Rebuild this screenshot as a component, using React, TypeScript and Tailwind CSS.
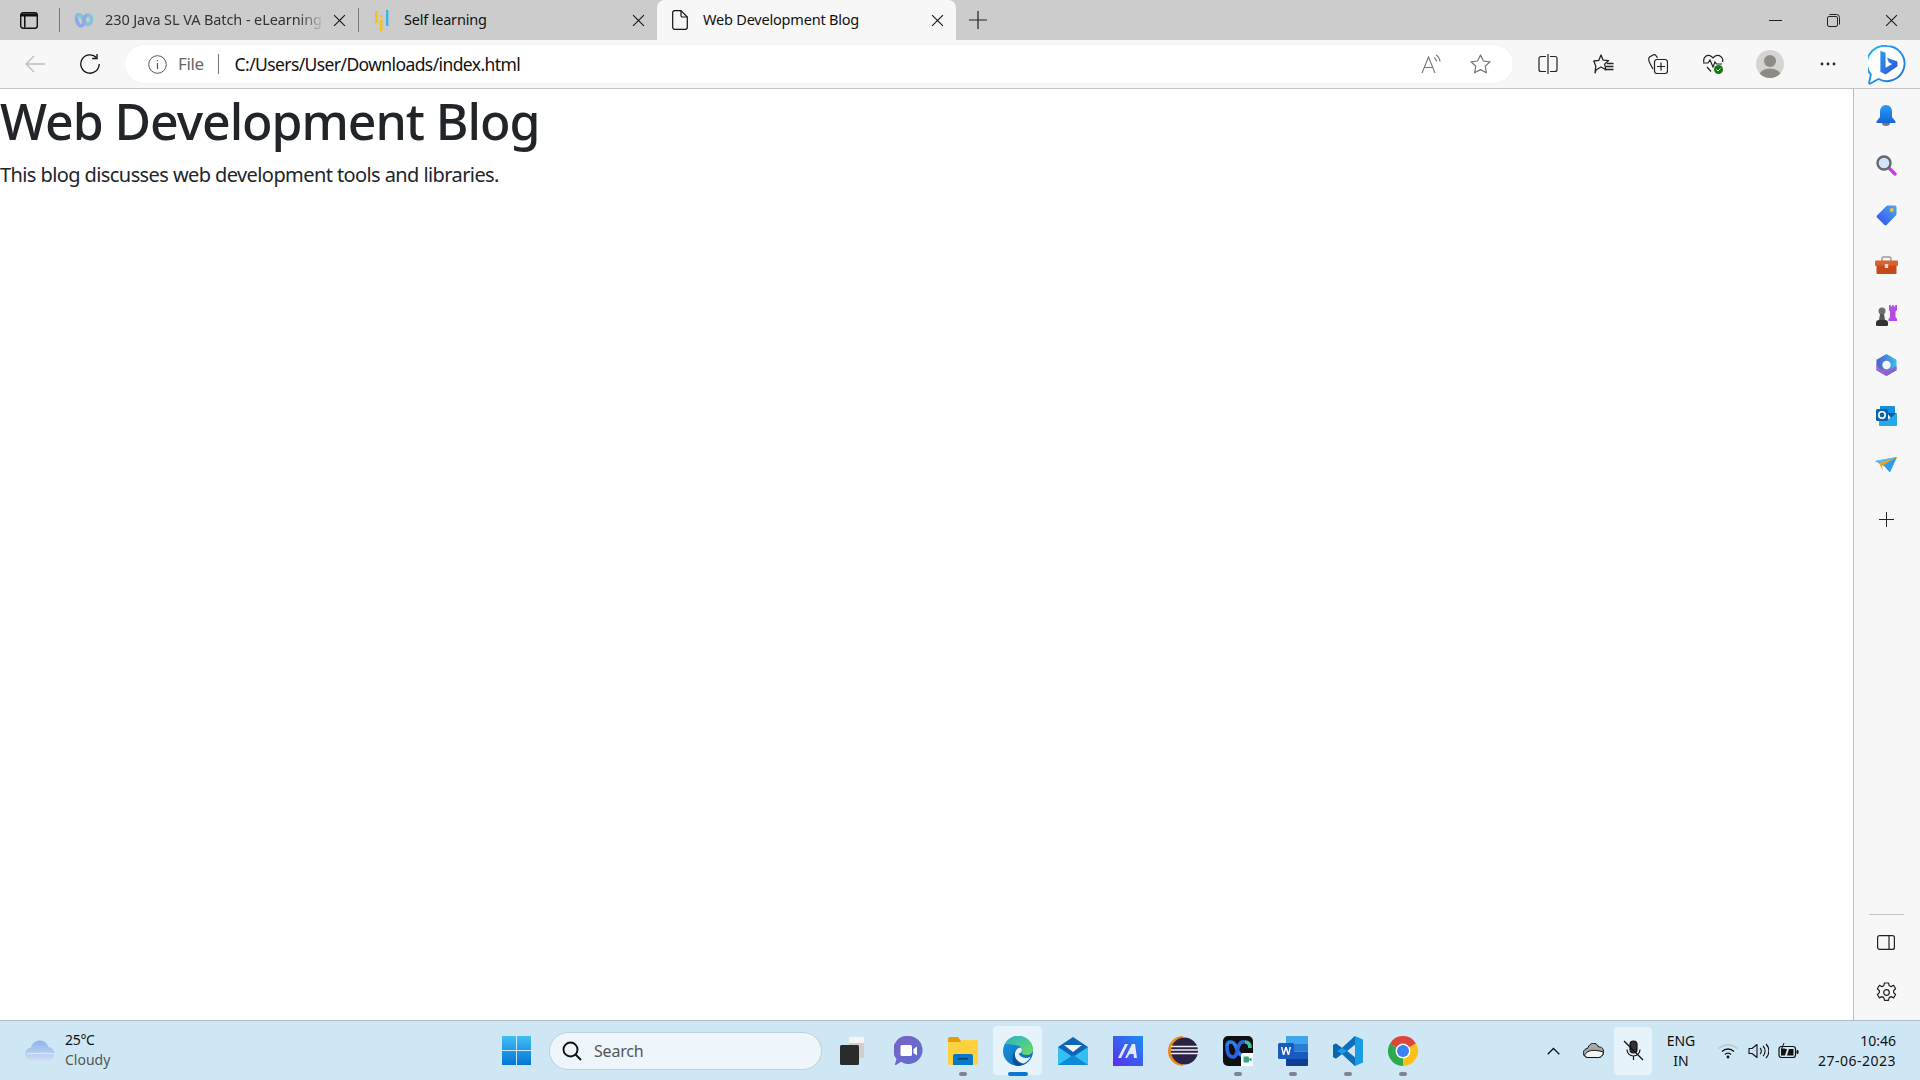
import React from "react";

function X({ s = 13, c = "#1a1a1a" }: { s?: number; c?: string }) {
  return (
    <svg width={s} height={s} viewBox="0 0 12 12" fill="none" stroke={c} strokeWidth="1.100">
      <path d="M1 1l10 10M11 1L1 11" />
    </svg>
  );
}

function Plus({ s = 18 }: { s?: number }) {
  return (
    <svg width={s} height={s} viewBox="0 0 18 18" fill="none" stroke="#222" strokeWidth="1.200">
      <path d="M9 0v18M0 9h18" />
    </svg>
  );
}

function WebexMark() {
  return (
    <svg width="20" height="15" viewBox="0 0 20 15" fill="none" strokeWidth="3.600">
      <path d="M2.500 4c0-4 5-3 7.500 3.500S17.500 11 17.500 7c0-4-2.500-5-4-5" stroke="#7fc4d8" />
      <path d="M2.500 4c0 6 2.500 9 4.500 9s3-2.500 3-5.500S12 2 13.500 2" stroke="#8fa8e8" />
    </svg>
  );
}

function SelfLearningMark() {
  return (
    <svg width="14" height="21" viewBox="0 0 14 21" className="ml-[2px]">
      <rect x="0" y="1" width="2.400" height="12" fill="#f6c018" />
      <rect x="5" y="10" width="2.400" height="11" fill="#f6c018" />
      <rect x="5" y="5" width="2.400" height="2.400" fill="#f6c018" />
      <rect x="11" y="0" width="2.400" height="16" fill="#3fb2e8" />
    </svg>
  );
}

function Tab({
  icon,
  title,
  active,
  fade,
  width,
  textStyle,
}: {
  icon: React.ReactNode;
  title: string;
  active?: boolean;
  fade?: boolean;
  width: string;
  textStyle: string;
}) {
  return (
    <div
      className={`flex h-10 items-center ${width} ${
        active ? "rounded-t-lg bg-[#f7f7f7] pl-[15px] pr-[12px]" : "pl-[14px] pr-[12px]"
      }`}
    >
      <span className="flex w-[31px] shrink-0 items-center">{icon}</span>
      <span
        className={`flex-1 whitespace-nowrap text-[14.500px] ${textStyle} ${
          fade ? "[mask-image:linear-gradient(to_right,black_88%,transparent_100%)]" : ""
        }`}
      >
        {title}
      </span>
      <span className="ml-2 flex w-[13px] shrink-0 items-center justify-center">
        <X />
      </span>
    </div>
  );
}

function TabStrip() {
  return (
    <div className="flex h-10 shrink-0 items-center bg-[#cccccc]">
      <div className="flex w-[59px] items-center justify-center pr-[1px]">
        <svg width="18" height="17" viewBox="0 0 18 17" fill="none">
          <rect x="0.700" y="0.700" width="16.600" height="15.600" rx="2.500" stroke="#111" strokeWidth="1.400" />
          <path d="M1 1.500h16v3H5.500v11H4v-11H1z" fill="#111" />
        </svg>
      </div>
      <div className="h-6 w-px bg-[#777]" />
      <Tab
        width="w-[298px]"
        icon={<WebexMark />}
        title="230 Java SL VA Batch - eLearning"
        fade
        textStyle="tracking-[-0.100px] text-[#333]"
      />
      <div className="h-6 w-px bg-[#777]" />
      <Tab width="w-[298px]" icon={<SelfLearningMark />} title="Self learning" textStyle="tracking-[-0.200px] text-[#111]" />
      <Tab
        width="w-[299px]"
        active
        icon={
          <svg width="16" height="20" viewBox="0 0 16 20" fill="none" stroke="#111" strokeWidth="1.200">
            <path d="M2.500.700h6.500L15.300 7v10.300a2 2 0 0 1-2 2H2.700a2 2 0 0 1-2-2V2.500A1.800 1.800 0 0 1 2.500.700z" />
            <path d="M9 .7v4.800a1.500 1.500 0 0 0 1.500 1.500h4.800" />
          </svg>
        }
        title="Web Development Blog"
        textStyle="tracking-[-0.200px] text-[#111]"
      />
      <div className="ml-[13px] flex w-[18px] items-center justify-center">
        <Plus />
      </div>
      <div className="ml-auto flex items-center">
        <div className="flex w-[58px] justify-center">
          <div className="h-px w-[13px] bg-[#222]" />
        </div>
        <div className="flex w-[58px] justify-center">
          <svg width="13" height="13" viewBox="0 0 13 13" fill="none" stroke="#222" strokeWidth="1">
            <rect x="0.500" y="2.500" width="10" height="10" rx="1.500" />
            <path d="M2.500.500h7a3 3 0 0 1 3 3v7" />
          </svg>
        </div>
        <div className="flex w-[58px] justify-center">
          <X s={13} c="#222" />
        </div>
      </div>
    </div>
  );
}

function ToolIcon({ children, w }: { children: React.ReactNode; w: string }) {
  return <div className={`flex h-12 shrink-0 items-center justify-center ${w}`}>{children}</div>;
}

function Toolbar() {
  return (
    <div className="flex h-[49px] shrink-0 items-start border-b border-[#c4c4c4] bg-[#f7f7f7]">
      <div className="flex h-12 w-[125px] shrink-0 items-center pl-[25px]">
        <svg width="20" height="18" viewBox="0 0 20 18" fill="none" stroke="#bdbdbd" strokeWidth="1.300">
          <path d="M20 9H1M9 1L1 9l8 8" />
        </svg>
        <svg width="20" height="20" viewBox="0 0 20 20" fill="none" stroke="#111" strokeWidth="1.300" className="ml-[35px]">
          <path d="M16.500 3.500A9.200 9.200 0 1 0 19.200 10" />
          <path d="M17 0v4.500h-4.800" />
        </svg>
      </div>
      <div className="mt-[5px] flex h-[38px] w-[1388px] shrink-0 items-center rounded-full bg-white pl-[23px] pr-[22px] shadow-[0_0_2px_rgba(0,0,0,0.08)]">
        <svg width="19" height="19" viewBox="0 0 19 19" fill="none" stroke="#555" strokeWidth="1">
          <circle cx="9.500" cy="9.500" r="8.800" />
          <path d="M9.500 8v6M9.500 5v1.300" strokeWidth="1.200" />
        </svg>
        <span className="ml-[11px] text-[17px] tracking-[-0.400px] text-[#666]">File</span>
        <span className="ml-[14px] h-[20px] w-px bg-[#777]" />
        <span className="ml-[16px] text-[17.500px] tracking-[-0.600px] text-[#111]">C:/Users/User/Downloads/index.html</span>
        <div className="ml-auto flex items-center gap-[28px]">
          <svg width="21" height="20" viewBox="0 0 21 20" fill="none" stroke="#777" strokeWidth="1.100">
            <path d="M1 19L7.500 3 14 19M3.300 13.500h8.500" />
            <path d="M13 3.500a5 5 0 0 1 2.500 4M15 1a8 8 0 0 1 4 6.500" />
          </svg>
          <svg width="21" height="20" viewBox="0 0 21 20" fill="none" stroke="#777" strokeWidth="1.200">
            <path d="M10.500 1l2.900 6 6.600.8-4.800 4.500 1.200 6.500-5.900-3.200-5.900 3.200 1.200-6.500L1 7.800 7.600 7z" strokeLinejoin="round" />
          </svg>
        </div>
      </div>
      <ToolIcon w="w-[70px]">
        <svg width="20" height="20" viewBox="0 0 20 20" fill="none" stroke="#222" strokeWidth="1.200">
          <path d="M8 2.500H3a2 2 0 0 0-2 2v11a2 2 0 0 0 2 2h5M12 2.500h5a2 2 0 0 1 2 2v11a2 2 0 0 1-2 2h-5" />
          <path d="M10 0v20" />
        </svg>
      </ToolIcon>
      <ToolIcon w="w-[40px]">
        <svg width="21" height="20" viewBox="0 0 21 20" fill="none" stroke="#222" strokeWidth="1.300">
          <path d="M8 1l2.100 5.200 5.500.4-4 3.600 1.300 5.600L8 13l-5 3-1 3 .800-6.800L.800 7l5-.700z" strokeLinejoin="round" />
          <path d="M14 9.500h6.500M13 12.500h7.500M11.500 15.500h9" />
        </svg>
      </ToolIcon>
      <ToolIcon w="w-[70px]">
        <svg width="20" height="20" viewBox="0 0 20 20" fill="none" stroke="#222" strokeWidth="1.200">
          <path d="M5 15L2 9.500C.500 6.500.500 4 1.500 3L5 1c1-.700 2.500-.500 3 .500L9.500 4" />
          <rect x="6.500" y="5.500" width="13" height="14" rx="2.500" />
          <path d="M13 8.500v8M9 12.500h8" />
        </svg>
      </ToolIcon>
      <ToolIcon w="w-[40px]">
        <svg width="21" height="20" viewBox="0 0 21 20" fill="none">
          <path d="M1 8.500C-.500 3.500 4 -.500 8.500 2.500L10 4l1.500-1.500C16-.500 21 3.500 19.500 8" stroke="#222" strokeWidth="1.200" />
          <path d="M0 9h5l2-3 3 7 2-5 1.500 2H19M4 13l4 4.500" stroke="#222" strokeWidth="1.200" />
          <circle cx="15.500" cy="15.500" r="4.500" fill="#107c10" />
          <path d="M13.500 15.500l1.500 1.500 2.500-2.500" stroke="#fff" strokeWidth="1" />
        </svg>
      </ToolIcon>
      <ToolIcon w="w-[74px]">
        <svg width="28" height="28" viewBox="0 0 28 28">
          <defs>
            <clipPath id="pc">
              <circle cx="14" cy="14" r="14" />
            </clipPath>
          </defs>
          <circle cx="14" cy="14" r="14" fill="#d6d4d0" />
          <g clipPath="url(#pc)" fill="#8f8b86">
            <circle cx="14" cy="11" r="6" />
            <ellipse cx="14" cy="25" rx="10.500" ry="6.500" />
          </g>
        </svg>
      </ToolIcon>
      <ToolIcon w="w-[42px]">
        <svg width="16" height="4" viewBox="0 0 16 4" fill="#222">
          <circle cx="2" cy="2" r="1.400" />
          <circle cx="8" cy="2" r="1.400" />
          <circle cx="14" cy="2" r="1.400" />
        </svg>
      </ToolIcon>
      <div className="flex h-12 w-[71px] shrink-0 items-center pl-[19px] pt-[1px]">
        <svg width="38" height="40" viewBox="0 0 40 42" fill="none">
          <defs>
            <linearGradient id="bb" x1="0" y1="0" x2="1" y2="1">
              <stop offset="0" stopColor="#25b5ee" />
              <stop offset="1" stopColor="#1f6fe0" />
            </linearGradient>
            <linearGradient id="bl" x1="0" y1="0" x2="1" y2="1">
              <stop offset="0" stopColor="#2f9cf0" />
              <stop offset="1" stopColor="#2a4fd8" />
            </linearGradient>
          </defs>
          <path
            d="M20 1a18.500 18.500 0 1 1-9 34.700L2.500 40.500c-.800.500-1.500 0-1.300-1L3 31A18.500 18.500 0 0 1 20 1z"
            fill="#fff"
            stroke="url(#bb)"
            strokeWidth="2"
          />
          <path d="M13 6l5.500 2v16l7-4-3.500-1.700-2-5 11 4v5L18.500 31 13 28z" fill="url(#bl)" />
        </svg>
      </div>
    </div>
  );
}

function Bell() {
  return (
    <svg width="20" height="21" viewBox="0 0 20 21">
      <defs>
        <linearGradient id="bell" x1="0" y1="0" x2="0" y2="1">
          <stop offset="0" stopColor="#2a9df0" />
          <stop offset="1" stopColor="#1565d8" />
        </linearGradient>
      </defs>
      <path d="M6 18h8a4 3 0 0 1-8 0z" fill="#777" />
      <path d="M10 0c4 0 6 3 6 7v5l3.500 4.500c.300.600 0 1.500-.800 1.500H1.300c-.800 0-1.100-.900-.800-1.500L4 12V7c0-4 2-7 6-7z" fill="url(#bell)" />
    </svg>
  );
}

function Magnifier() {
  return (
    <svg width="21" height="21" viewBox="0 0 21 21" fill="none">
      <path d="M12.500 12.500L19 19" stroke="#c93ce0" strokeWidth="3.400" strokeLinecap="round" />
      <circle cx="8" cy="8" r="6.500" fill="#cfe4f8" stroke="#66686b" strokeWidth="2.400" />
    </svg>
  );
}

function PriceTag() {
  return (
    <svg width="21" height="21" viewBox="0 0 21 21">
      <defs>
        <linearGradient id="tag" x1="0" y1="1" x2="1" y2="0">
          <stop offset="0" stopColor="#3a4de8" />
          <stop offset="1" stopColor="#4aa8f5" />
        </linearGradient>
      </defs>
      <path d="M12 .500h7a1.500 1.500 0 0 1 1.500 1.500v7a2 2 0 0 1-.600 1.400L10.500 20a1.500 1.500 0 0 1-2 0L1 12.500a1.500 1.500 0 0 1 0-2L10.500 1A2 2 0 0 1 12 .500z" fill="url(#tag)" />
      <circle cx="15.800" cy="5" r="2" fill="#f6c32c" />
    </svg>
  );
}

function Toolbox() {
  return (
    <svg width="23" height="18" viewBox="0 0 23 18">
      <path d="M7 5V2.500A1.500 1.500 0 0 1 8.500 1h6A1.500 1.500 0 0 1 16 2.500V5" fill="none" stroke="#9a9a9a" strokeWidth="1.500" />
      <rect x="0" y="4.500" width="23" height="5.500" rx="1" fill="#e0602c" />
      <rect x="1.500" y="9.500" width="20" height="8.500" rx="1" fill="#c44a1a" />
      <rect x="9.800" y="8" width="3.400" height="4" rx=".6" fill="#d8d8d8" />
    </svg>
  );
}

function Games() {
  return (
    <svg width="23" height="23" viewBox="0 0 23 23">
      <path d="M14 1h1.800v1.500h1.400V1h1.600v1.500h1.400V1H22v5l-1.500 1.500V13l1.500 2v2h-8.500v-2l1.500-2V7.500L14 6z" fill="#b84ae8" />
      <circle cx="7" cy="7" r="3.500" fill="#6e6e6e" />
      <path d="M5 10h4l1 6H4z" fill="#585858" />
      <path d="M1 19c0-2 1-3 3-3h6c2 0 3 1 3 3v2a1 1 0 0 1-1 1H2a1 1 0 0 1-1-1z" fill="#333" />
    </svg>
  );
}

function M365() {
  return (
    <svg width="21" height="22" viewBox="0 0 21 22" fill="none">
      <defs>
        <linearGradient id="m1" x1="0" y1="0" x2="1" y2="0">
          <stop offset="0" stopColor="#4f5cc8" />
          <stop offset="1" stopColor="#3cc0ea" />
        </linearGradient>
        <linearGradient id="m2" x1="0" y1="0" x2="1" y2="1">
          <stop offset="0" stopColor="#b76bd8" />
          <stop offset="1" stopColor="#7d5bd0" />
        </linearGradient>
      </defs>
      <path d="M10.500 0L20.500 5.800V16.200L10.500 22 .5 16.200V5.800z" fill="url(#m1)" />
      <path d="M20.500 12v4.200L10.500 22 .5 16.200V9c1 5 5 8 10 7 4-.7 7-2 10-4z" fill="url(#m2)" />
      <circle cx="10.500" cy="11" r="4.200" fill="#f7f7f7" />
    </svg>
  );
}

function Outlook() {
  return (
    <svg width="21" height="21" viewBox="0 0 21 21">
      <path d="M4 1h14a1 1 0 0 1 1 1v6H4z" fill="#1490df" />
      <path d="M21 8.500V20a1 1 0 0 1-1 1H4a1 1 0 0 1-1-1v-5h8z" fill="#28a8ea" />
      <path d="M11 8h10l-6 5z" fill="#0a5ea8" />
      <rect x="0" y="4" width="12" height="12" rx="1.500" fill="#0a64ad" />
      <circle cx="6" cy="10" r="3.200" fill="none" stroke="#fff" strokeWidth="1.600" />
    </svg>
  );
}

function Send() {
  return (
    <svg width="22" height="16" viewBox="0 0 22 16">
      <path d="M0 4L22 0 15 15.500 9 9z" fill="#2a9df0" />
      <path d="M0 4L22 0 7 6.500z" fill="#4cc2f5" />
      <path d="M4 6L22 0 7 9l1 5z" fill="#f0a020" />
    </svg>
  );
}

function Sidebar() {
  const items = [<Bell />, <Magnifier />, <PriceTag />, <Toolbox />, <Games />, <M365 />, <Outlook />, <Send />];
  return (
    <aside className="flex w-[67px] shrink-0 flex-col items-center border-l border-[#bdbdbd] bg-[#f7f7f7] pr-[2px] pt-px">
      {items.map((node, i) => (
        <div key={i} className="flex h-[50px] items-center justify-center">
          {node}
        </div>
      ))}
      <div className="mt-[4px] flex h-[50px] items-center justify-center">
        <Plus s={15} />
      </div>
      <div className="mb-[2px] mt-auto h-px w-[35px] bg-[#c4c4c4]" />
      <div className="flex h-[50px] items-center justify-center">
        <svg width="18" height="15" viewBox="0 0 18 15" fill="none" stroke="#222" strokeWidth="1.200">
          <rect x=".6" y=".6" width="16.800" height="13.800" rx="2" />
          <path d="M12 .6v13.800" />
        </svg>
      </div>
      <div className="mb-[3px] flex h-[50px] items-center justify-center">
        <svg width="21" height="21" viewBox="0 0 21 21" fill="none" stroke="#222" strokeWidth="1.200" strokeLinejoin="round">
          <path d="M8.500 1h4l.7 2.700 1.900.9 2.500-1.300 2 3.400-2 1.900v2l2 1.900-2 3.400-2.500-1.300-1.900 1-.7 2.700h-4l-.7-2.700-1.900-1-2.500 1.300-2-3.400 2-1.900v-2l-2-1.900 2-3.400L5.900 4.600l1.900-.9z" />
          <circle cx="10.500" cy="10.500" r="2.800" />
        </svg>
      </div>
    </aside>
  );
}

function Dot({ active }: { active?: boolean }) {
  return (
    <span
      className={`absolute bottom-[5px] left-1/2 h-[4px] -translate-x-1/2 rounded-full ${
        active ? "w-[20px] bg-[#0a78d4]" : "w-[8px] bg-[#7c868c]"
      }`}
    />
  );
}

function App_({ children, w = "w-[55px]", dot, active }: { children: React.ReactNode; w?: string; dot?: boolean; active?: boolean }) {
  return (
    <div className={`relative flex h-[60px] shrink-0 items-center justify-center ${w}`}>
      {active && <span className="absolute inset-x-[3px] top-[5px] bottom-[6px] rounded-[4px] bg-white/50" />}
      <span className="relative flex">{children}</span>
      {dot && <Dot active={active} />}
    </div>
  );
}

function Taskbar() {
  return (
    <footer className="flex h-[60px] shrink-0 items-center border-t border-[#aebfcc] bg-[#cfe7f4] text-[#111]">
      <div className="flex w-[502px] shrink-0 items-center pl-[25px]">
        <svg width="31" height="21" viewBox="0 0 31 21">
          <defs>
            <linearGradient id="cl" x1="0" y1="0" x2="0" y2="1">
              <stop offset="0" stopColor="#8fb2ea" />
              <stop offset="1" stopColor="#cfdcf5" />
            </linearGradient>
          </defs>
          <path d="M7 20.500a6.500 6.500 0 0 1-1-13C7 3 11 .5 15 .5c4.500 0 7.500 3 8.300 6.500A6.800 6.800 0 0 1 24 20.500z" fill="url(#cl)" />
          <path d="M2 14a40 14 0 0 1 28 0" fill="none" stroke="#fff" strokeWidth=".8" opacity=".7" />
        </svg>
        <div className="-mt-[2px] ml-[9px] flex flex-col text-[14px] leading-[20px]">
          <span className="tracking-[-0.300px]">25°C</span>
          <span className="text-[#555]">Cloudy</span>
        </div>
      </div>
      <svg width="29" height="29" viewBox="0 0 29 29" className="shrink-0">
        <defs>
          <linearGradient id="win" x1="0" y1="0" x2="0" y2="1">
            <stop offset="0" stopColor="#3fc0f5" />
            <stop offset="1" stopColor="#0474d4" />
          </linearGradient>
        </defs>
        <path d="M0 0h14v14H0zM15 0h14v14H15zM0 15h14v14H0zM15 15h14v14H15z" fill="url(#win)" />
      </svg>
      <div className="ml-[18px] flex h-[38px] w-[273px] shrink-0 items-center rounded-full border border-[#bcd0dc] bg-[#eef6fb] pl-[12px]">
        <svg width="20" height="20" viewBox="0 0 20 20" fill="none" stroke="#111" strokeWidth="1.900">
          <circle cx="8.500" cy="8.500" r="7" />
          <path d="M13.500 13.500L19 19" />
        </svg>
        <span className="ml-[12px] text-[16px] tracking-[-0.200px] text-[#555]">Search</span>
      </div>
      <App_ w="w-[60px]">
        <svg width="24" height="28" viewBox="0 0 24 28">
          <rect x="9" y="0" width="15" height="21" rx="1.500" fill="#f4f4f4" />
          <rect x="9" y="6" width="15" height="15" fill="#cfcfcf" />
          <rect x="0" y="8" width="19" height="20" rx="1.500" fill="#2b2b2b" />
        </svg>
      </App_>
      <App_ w="w-[53px]">
        <svg width="29" height="30" viewBox="0 0 29 30">
          <defs>
            <linearGradient id="tm" x1="0" y1="0" x2="1" y2="1">
              <stop offset="0" stopColor="#7d62c4" />
              <stop offset="1" stopColor="#5d6fd4" />
            </linearGradient>
          </defs>
          <path d="M14.500 0a14 14 0 1 1-7.500 25.800L2 29c-.800.300-1.300-.200-1-1l1.500-5A14 14 0 0 1 14.500 0z" fill="url(#tm)" />
          <rect x="6.500" y="9" width="11.500" height="11" rx="1.500" fill="#fff" />
          <path d="M19.500 13l3.500-2.500v9L19.500 17z" fill="#fff" />
        </svg>
      </App_>
      <App_ dot>
        <svg width="30" height="28" viewBox="0 0 30 28">
          <path d="M0 2a2 2 0 0 1 2-2h8l3 4h17v6H0z" fill="#dfa008" />
          <path d="M0 5h12l3-2h15v23a2 2 0 0 1-2 2H2a2 2 0 0 1-2-2z" fill="#ffd13f" />
          <path d="M5 19a2 2 0 0 1 2-2h16a2 2 0 0 1 2 2v9H5z" fill="#0a78c8" />
          <rect x="10" y="21" width="10" height="1.500" fill="#083f78" />
        </svg>
      </App_>
      <App_ dot active>
        <svg width="30" height="30" viewBox="0 0 30 30">
          <defs>
            <linearGradient id="e1" x1="0" y1="0" x2="1" y2="1">
              <stop offset="0" stopColor="#26b5c8" />
              <stop offset="1" stopColor="#6fdc5c" />
            </linearGradient>
            <linearGradient id="e2" x1="0" y1="0" x2="1" y2="1">
              <stop offset="0" stopColor="#1a98e0" />
              <stop offset="1" stopColor="#0b62b8" />
            </linearGradient>
          </defs>
          <circle cx="15" cy="15" r="15" fill="url(#e2)" />
          <path d="M2 8C5 3 10 0 15 0c9 0 15 6 15 13.500 0 3.500-3 5.500-6.500 5.500-2.500 0-4.500-.7-5-2 1.800-2.500 1-6.500-3.500-7.500-4-.9-8 -1-13-1.500z" fill="url(#e1)" />
          <path d="M18 11.500c2 3 .5 5.500-2.500 6 2 4 6 5.500 12 3.500-1.500 3-4 5.500-7.500 6.800-5 .4-8.500-2.500-9-7-.4-4 2.500-9 7-9.300z" fill="#e6f2fa" />
          <path d="M13 14c-2 3-1.500 8 2 11 2.500 2 5 3 7 2.800-2 1.300-4.500 2.200-7 2.200-3 0-5.500-3-5.500-8 0-3.500 1.500-6.500 3.500-8z" fill="#0c4f9c" />
        </svg>
      </App_>
      <App_>
        <svg width="30" height="28" viewBox="0 0 30 28">
          <path d="M0 10L15 0l15 10v18H0z" fill="#0e65b8" />
          <path d="M6 8h18l-9 7z" fill="#f4f4f4" />
          <path d="M0 10l15 10 15-10v18H0z" fill="#33c0f0" />
          <path d="M0 28l15-10 15 10z" fill="#0f8ad8" />
        </svg>
      </App_>
      <App_>
        <svg width="30" height="30" viewBox="0 0 30 30">
          <defs>
            <linearGradient id="ds" x1="0" y1="1" x2="1" y2="0">
              <stop offset="0" stopColor="#5b2cf0" />
              <stop offset="1" stopColor="#1a8ff0" />
            </linearGradient>
          </defs>
          <rect width="30" height="30" fill="url(#ds)" />
          <path d="M5 22L12 8h3L8 22zM12 22l7-14h3l2 14h-3l-.5-4h-4L14 22z" fill="#e6eaff" />
        </svg>
      </App_>
      <App_>
        <svg width="30" height="30" viewBox="0 0 30 30">
          <path d="M15 0a15 15 0 1 0 0 30z" fill="#e98a20" />
          <circle cx="16.500" cy="15" r="13.500" fill="#2c2347" />
          <path d="M3 10.500h27M3 14h27M3 17.500h27" stroke="#f0f0f5" strokeWidth="1.600" />
        </svg>
      </App_>
      <App_ dot>
        <svg width="30" height="30" viewBox="0 0 30 30" fill="none">
          <rect width="30" height="30" rx="5" fill="#101010" />
          <path d="M4 10c0-6 7-5 9 1s5 10 9 9" stroke="#2a7ff0" strokeWidth="3.600" />
          <path d="M4 10c0 8 3 11 6 11s4-4 5-9 4-7 7-6" stroke="#2b62e0" strokeWidth="3.600" />
          <path d="M22 6c4 0 5 3 5 6" stroke="#3cc88c" strokeWidth="3.600" />
          <path d="M18 19a2 2 0 0 1 2-2h10v13H18z" fill="#fff" />
          <rect x="20.500" y="20.500" width="5.500" height="6" rx="1" fill="#35a875" />
          <path d="M26 23l2.500-1.500v4L26 24z" fill="#35a875" />
        </svg>
      </App_>
      <App_ dot>
        <svg width="30" height="30" viewBox="0 0 30 30">
          <path d="M8 1a1 1 0 0 1 1-1h20a1 1 0 0 1 1 1v7H8z" fill="#41a5ee" />
          <rect x="8" y="8" width="22" height="7.500" fill="#2b7cd3" />
          <rect x="8" y="15.500" width="22" height="7.500" fill="#185abd" />
          <path d="M8 23h22v6a1 1 0 0 1-1 1H9a1 1 0 0 1-1-1z" fill="#103f91" />
          <rect x="0" y="7" width="16" height="16" rx="1.500" fill="#185abd" />
          <path d="M3 11l1.800 8h1.500L8 13.500 9.700 19h1.500L13 11h-1.500l-1 5.500L8.800 11H7.200l-1.700 5.500-1-5.500z" fill="#fff" />
        </svg>
      </App_>
      <App_ dot>
        <svg width="30" height="30" viewBox="0 0 30 30">
          <path d="M22 0l8 3.500v23L22 30 9 18l-6 4.500L0 21V9l3-1.500L9 12zM22 8.500L14 15l8 6.500z" fill="#1a9be8" />
          <path d="M22 0v8.500L14 15l-5-3zM22 21.500V30L9 18l5-3z" fill="#0d70b8" />
          <path d="M3 7.500L9 12l-5 3 5 3-6 4.500L0 21V9z" fill="#0a65ad" />
        </svg>
      </App_>
      <App_ dot>
        <svg width="30" height="30" viewBox="0 0 30 30">
          <path d="M15 15L2 7.500A15 15 0 0 1 28 7.500z" fill="#de4437" />
          <path d="M15 15L2 7.500A15 15 0 0 0 15 30z" fill="#2da94f" />
          <path d="M15 15L28 7.500A15 15 0 0 1 15 30z" fill="#fbc116" />
          <circle cx="15" cy="15" r="7.500" fill="#fff" />
          <circle cx="15" cy="15" r="6" fill="#3b82f0" />
        </svg>
      </App_>
      <div className="ml-auto flex items-center">
        <div className="flex w-[40px] justify-center">
          <svg width="13" height="8" viewBox="0 0 13 8" fill="none" stroke="#111" strokeWidth="1.300">
            <path d="M.7 7.300L6.500 1.500l5.800 5.800" />
          </svg>
        </div>
        <div className="flex w-[40px] justify-center">
          <svg width="21" height="15" viewBox="0 0 21 15">
            <path d="M5 14.500a4.500 4.500 0 0 1-.500-9C6 1.500 9-.500 12 .500c2 .700 3 2 3.500 3.500 3-.5 5.500 2 5 5.500-.3 3-2.500 5-5 5z" fill="#a8a8a8" stroke="#111" strokeWidth="1" />
            <path d="M1.500 12c3-5 9-6 19-3-.3 3-2.500 5.500-5 5.500H5c-1.500 0-2.800-.900-3.500-2.500z" fill="#f3f3f3" stroke="#111" strokeWidth="1" />
          </svg>
        </div>
        <div className="relative ml-px flex h-[48px] w-[38px] items-center justify-center rounded-[4px] bg-white/50">
          <svg width="21" height="21" viewBox="0 0 21 21" fill="none" stroke="#111" strokeWidth="1.200">
            <rect x="7" y="1" width="7" height="12" rx="3.500" fill="#333" />
            <path d="M4 9.500a6.500 6.500 0 0 0 13 0M10.500 16v4" />
            <path d="M1 1l19 19" />
          </svg>
        </div>
        <div className="flex w-[58px] flex-col items-center text-[14px] leading-[20px]">
          <span>ENG</span>
          <span>IN</span>
        </div>
        <div className="ml-[3px] flex w-[30px] justify-center">
          <svg width="20" height="16" viewBox="0 0 20 16" fill="none" strokeWidth="1.300">
            <path d="M1 5.500a13 13 0 0 1 18 0" stroke="#b5bdc2" />
            <path d="M4 8.500a8.500 8.500 0 0 1 12 0M7 11.500a4 4 0 0 1 6 0" stroke="#111" />
            <circle cx="10" cy="14" r="1.400" fill="#111" />
          </svg>
        </div>
        <div className="flex w-[30px] justify-center">
          <svg width="21" height="16" viewBox="0 0 21 16" fill="none" stroke="#111" strokeWidth="1.100">
            <path d="M1 5.500h3L9 1.500v13l-5-4H1z" strokeLinejoin="round" />
            <path d="M12 5a4 4 0 0 1 0 6M15 3a7 7 0 0 1 0 10M18 1a10 10 0 0 1 0 14" />
          </svg>
        </div>
        <div className="flex w-[30px] justify-center">
          <svg width="21" height="16" viewBox="0 0 21 16" fill="none">
            <rect x="1" y="3.500" width="16.500" height="11" rx="2.500" stroke="#111" strokeWidth="1.200" />
            <path d="M3 6h6l-2 6.500H3zM11 6h4.500v6.500H9z" fill="#111" />
            <rect x="18.500" y="7" width="2" height="4" rx="1" fill="#111" />
            <path d="M6 0L3.500 6H7L5 10" stroke="#111" strokeWidth="1" />
          </svg>
        </div>
        <div className="flex w-[117px] flex-col items-end pr-[24px] text-[14px] leading-[20px]">
          <span>10:46</span>
          <span className="tracking-[0.500px]">27-06-2023</span>
        </div>
      </div>
    </footer>
  );
}

export default function App() {
  return (
    <div className="flex h-[1080px] w-[1920px] flex-col overflow-hidden bg-white font-['Noto_Sans',sans-serif]">
      <TabStrip />
      <Toolbar />
      <div className="flex min-h-0 flex-1">
        <main className="min-w-0 flex-1 bg-white pt-[2px] text-[#212529]">
          <h1 className="mb-[9px] text-[50px] font-medium leading-[60px] tracking-[-1.050px]">Web Development Blog</h1>
          <p className="text-[20px] leading-[30px] tracking-[-0.590px]">This blog discusses web development tools and libraries.</p>
        </main>
        <Sidebar />
      </div>
      <Taskbar />
    </div>
  );
}
